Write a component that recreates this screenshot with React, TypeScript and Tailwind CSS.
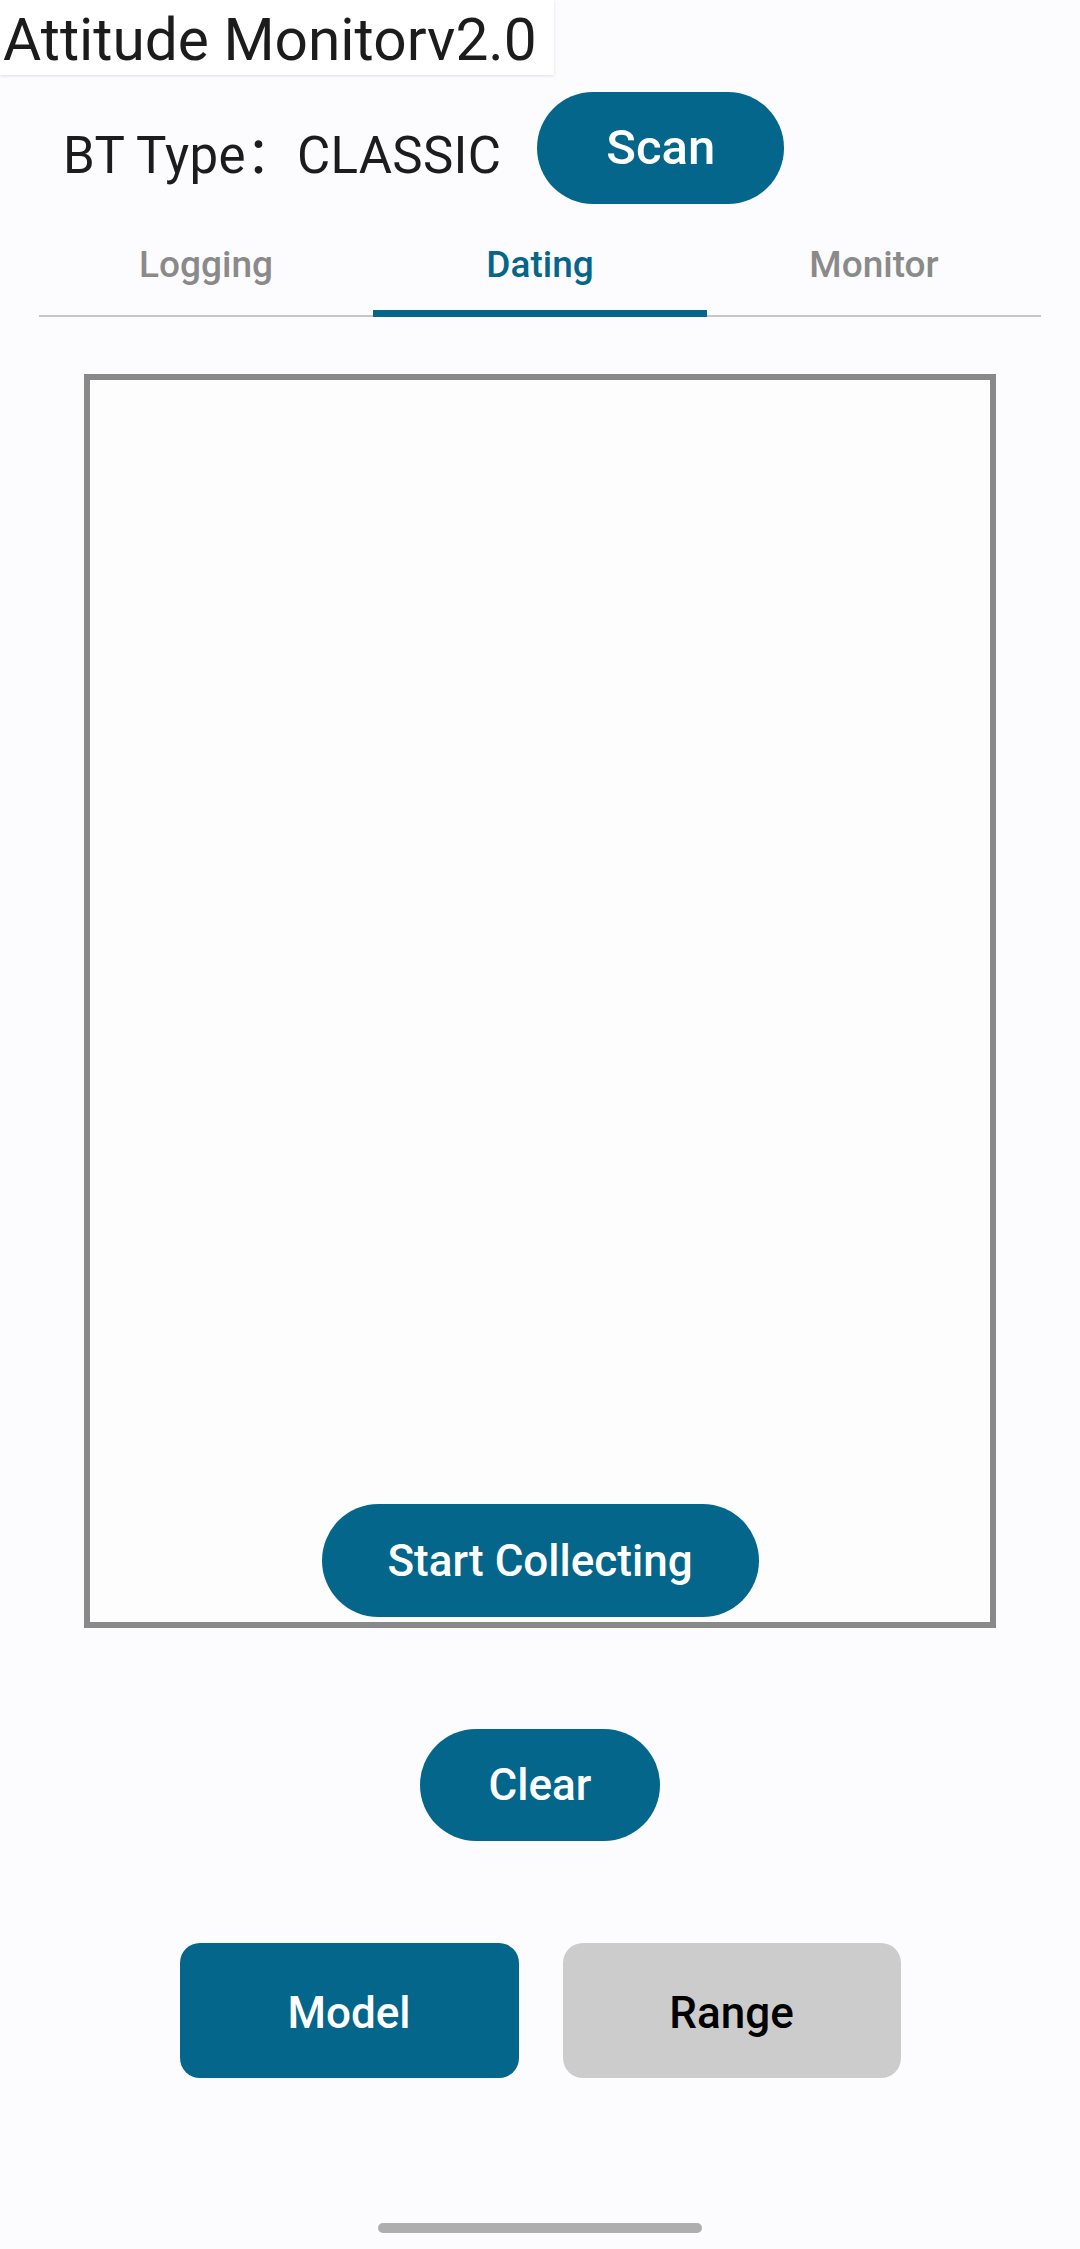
const tabs = ["Logging", "Dating", "Monitor"];
const active = "Dating";

export default function App() {
  return (
    <div className="flex h-[2249px] w-[1080px] flex-col bg-[#fcfcfe] font-['Roboto','Noto_Sans_CJK_SC',sans-serif] text-[#1c1c1c]">
      {/* Title bar */}
      <div className="flex">
        <div className="h-[75px] bg-white pl-[3px] pr-[17px] text-[58.6px] leading-[80px] shadow-[0_1px_3px_rgba(0,0,0,0.12)]">
          Attitude Monitorv2.0
        </div>
      </div>

      {/* BT row */}
      <div className="mt-[17px] flex items-center pl-[63px]">
        <span className="mt-[14px] text-[51px] leading-none tracking-[0.3px]">BT Type：CLASSIC</span>
        <button className="ml-[36px] h-[112px] w-[247px] rounded-full bg-[#03668a] text-[49px] font-medium text-white">
          Scan
        </button>
      </div>

      {/* Tabs */}
      <div className="mx-[39px] flex">
        {tabs.map((t) => (
          <div key={t} className="flex h-[113px] flex-1 flex-col justify-between">
            <span
              className={
                "pt-[42px] text-center text-[37px] font-medium leading-none " +
                (t === active ? "text-[#03668a]" : "text-[#8a8a8a]")
              }
            >
              {t}
            </span>
            {t === active ? (
              <div className="h-[7px] bg-[#03668a]" />
            ) : (
              <div className="h-[2px] bg-[#c6c6c8]" />
            )}
          </div>
        ))}
      </div>

      {/* Canvas */}
      <div className="mx-[84px] mt-[57px] flex h-[1254px] flex-col items-center justify-end border-[6px] border-[#898989] bg-[#fdfdfe] pb-[5px]">
        <button className="h-[113px] w-[437px] rounded-full bg-[#03668a] text-[44px] font-medium text-white">
          Start Collecting
        </button>
      </div>

      <div className="mt-[101px] flex justify-center">
        <button className="h-[112px] w-[240px] rounded-full bg-[#03668a] text-[44px] font-medium text-white">
          Clear
        </button>
      </div>

      <div className="mt-[102px] flex justify-center gap-[44px]">
        <button className="h-[135px] w-[339px] rounded-[20px] bg-[#03668a] pt-[4px] text-[44px] font-medium text-white">
          Model
        </button>
        <button className="h-[135px] w-[338px] rounded-[20px] bg-[#cccccc] pt-[4px] text-[44px] font-medium text-black">
          Range
        </button>
      </div>

      <div className="mt-auto mb-[16px] flex justify-center">
        <div className="h-[10px] w-[324px] rounded-full bg-[#aeaeae]" />
      </div>
    </div>
  );
}
